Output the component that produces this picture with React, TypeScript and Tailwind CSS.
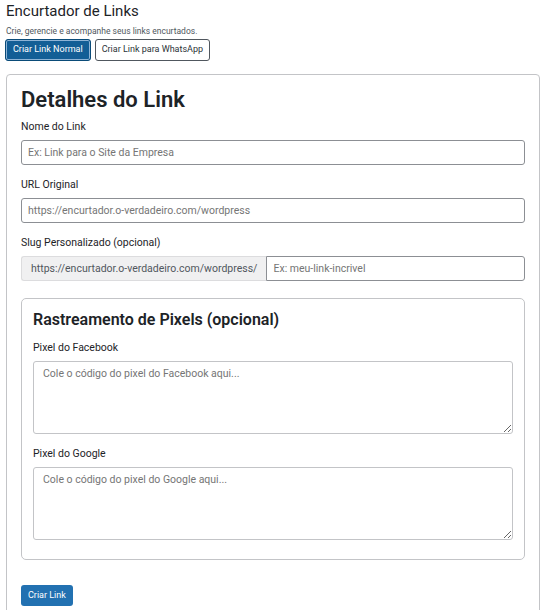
import React, { useState } from 'react';

const font = { fontFamily: 'Roboto, "Noto Sans", sans-serif' };

export default function App() {
  const [tab, setTab] = useState<'normal' | 'whatsapp'>('normal');
  const [form, setForm] = useState({
    name: '',
    url: '',
    slug: '',
    fbPixel: '',
    googlePixel: '',
  });

  const label = 'block text-[10.5px] leading-[15px] text-[#1d2327] mb-[6px]';
  const input =
    'block w-full h-[25px] rounded-[3px] border border-[#8c8f94] bg-white px-[6px] text-[10.5px] text-[#2c3338] placeholder:text-[#757575] outline-none';
  const textarea =
    'block w-full h-[73px] rounded-[3px] border border-[#c3c4c7] bg-white px-[9px] py-[4px] text-[10.5px] leading-[16px] text-[#2c3338] placeholder:text-[#757575] outline-none resize-y';
  const activeBtn =
    'h-[22px] px-[7px] rounded-[3px] border border-[#0a4b78] bg-[#135e96] text-[9px] text-white shadow-[inset_0_0_0_1px_#8fb4d6]';
  const idleBtn =
    'h-[22px] px-[6px] rounded-[3px] border border-[#50575e] bg-white text-[9px] text-[#2c3338]';

  return (
    <div className="min-h-[610px] bg-white pl-[6px] pr-[8px]" style={font}>
      <h1 className="text-[15px] leading-[20px] pt-[1px] text-[#1d2327]">Encurtador de Links</h1>
      <p className="mt-[4px] text-[8.5px] leading-[12px] text-[#50575e]">
        Crie, gerencie e acompanhe seus links encurtados.
      </p>
      <div className="mt-[2px] flex gap-[4px] -ml-[1px]">
        <button onClick={() => setTab('normal')} className={tab === 'normal' ? activeBtn : idleBtn}>
          Criar Link Normal
        </button>
        <button onClick={() => setTab('whatsapp')} className={tab === 'whatsapp' ? activeBtn : idleBtn}>
          Criar Link para WhatsApp
        </button>
      </div>

      <div className="mt-[13px] rounded-[4px] border border-[#c3c4c7] bg-white px-[14px] pt-[12px] pb-[20px]">
        <h2 className="text-[22px] leading-[26px] font-semibold text-[#1d2327] mb-[6px]">Detalhes do Link</h2>

        <label className={label}>Nome do Link</label>
        <input
          className={input + ' mb-[12px]'}
          placeholder="Ex: Link para o Site da Empresa"
          value={form.name}
          onChange={(e) => setForm({ ...form, name: e.target.value })}
        />

        <label className={label}>URL Original</label>
        <input
          className={input + ' mb-[12px]'}
          placeholder="https://encurtador.o-verdadeiro.com/wordpress"
          value={form.url}
          onChange={(e) => setForm({ ...form, url: e.target.value })}
        />

        <label className={label}>Slug Personalizado (opcional)</label>
        <div className="flex h-[25px]">
          <span className="flex items-center shrink-0 whitespace-nowrap rounded-l-[3px] border border-r-0 border-[#dcdcde] bg-[#f0f0f1] pl-[9px] pr-[9px] text-[10.5px] text-[#50575e]">
            https://encurtador.o-verdadeiro.com/wordpress/
          </span>
          <input
            className="flex-1 min-w-0 h-[25px] rounded-r-[3px] border border-[#8c8f94] bg-white px-[6px] text-[10.5px] text-[#2c3338] placeholder:text-[#757575] outline-none"
            placeholder="Ex: meu-link-incrivel"
            value={form.slug}
            onChange={(e) => setForm({ ...form, slug: e.target.value })}
          />
        </div>

        <div className="mt-[17px] rounded-[5px] border border-[#c3c4c7] px-[11px] pt-[11px] pb-[19px]">
          <h3 className="text-[16px] leading-[20px] font-semibold text-[#1d2327] mb-[10px]">
            Rastreamento de Pixels (opcional)
          </h3>
          <label className={label}>Pixel do Facebook</label>
          <textarea
            className={textarea + ' mb-[12px]'}
            placeholder="Cole o código do pixel do Facebook aqui..."
            value={form.fbPixel}
            onChange={(e) => setForm({ ...form, fbPixel: e.target.value })}
          />
          <label className={label}>Pixel do Google</label>
          <textarea
            className={textarea}
            placeholder="Cole o código do pixel do Google aqui..."
            value={form.googlePixel}
            onChange={(e) => setForm({ ...form, googlePixel: e.target.value })}
          />
        </div>

        <button className="mt-[25px] h-[21px] px-[7px] rounded-[3px] bg-[#2271b1] text-[9px] text-white">
          Criar Link
        </button>
      </div>
    </div>
  );
}
